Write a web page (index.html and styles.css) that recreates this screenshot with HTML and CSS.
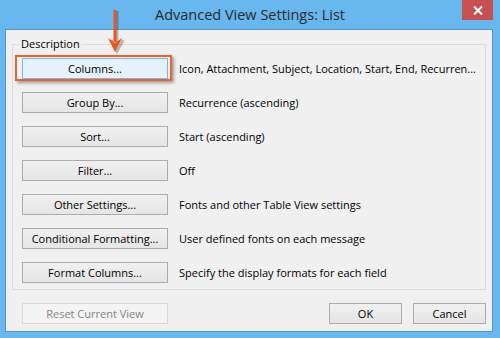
FILE: index.html
```html
<html>
<head>
  <title>Advanced View Settings: List</title>
  <link rel="stylesheet" href="styles.css">
</head>
<body>

<div class="window">
  <div class="titlebar">
    <span class="title">Advanced View Settings: List</span>
    <div class="close">
      <svg width="10" height="9" viewBox="0 0 10 9">
        <path d="M1 0.5 L9 8.5 M9 0.5 L1 8.5" stroke="#fff" stroke-width="2" fill="none"/>
      </svg>
    </div>
  </div>

  <div class="client">
    <fieldset class="group">
      <legend>Description</legend>
      <div class="row">
        <span class="marked"><button class="btn focused">Columns...</button></span>
        <span class="desc">Icon, Attachment, Subject, Location, Start, End, Recurren...</span>
      </div>
      <div class="row">
        <button class="btn">Group By...</button>
        <span class="desc">Recurrence (ascending)</span>
      </div>
      <div class="row">
        <button class="btn">Sort...</button>
        <span class="desc">Start (ascending)</span>
      </div>
      <div class="row">
        <button class="btn">Filter...</button>
        <span class="desc">Off</span>
      </div>
      <div class="row">
        <button class="btn">Other Settings...</button>
        <span class="desc">Fonts and other Table View settings</span>
      </div>
      <div class="row">
        <button class="btn">Conditional Formatting...</button>
        <span class="desc">User defined fonts on each message</span>
      </div>
      <div class="row">
        <button class="btn">Format Columns...</button>
        <span class="desc">Specify the display formats for each field</span>
      </div>
    </fieldset>

    <div class="footer">
      <button class="btn" disabled>Reset Current View</button>
      <div class="actions">
        <button class="btn small">OK</button>
        <button class="btn small">Cancel</button>
      </div>
    </div>
  </div>

  <!-- callout arrow -->
  <svg class="arrow" width="24" height="48" viewBox="0 0 24 48">
    <path d="M13 3 L13 36 M7 32 L13 43 L19 32" stroke="rgba(0,0,0,0.25)" stroke-width="3" fill="none"/>
    <path d="M11 2 L11 34" stroke="#e5591f" stroke-width="3" fill="none"/>
    <path d="M4 30 L11 44 L18 30 L11 35 Z" fill="#e5591f"/>
  </svg>
</div>

</body>
</html>
```

FILE: styles.css
```css
* {
  box-sizing: border-box;
}

body {
  margin: 0;
  background: #68b7ef;
  font-family: 'Open Sans', 'Noto Sans', sans-serif;
  font-size: 11px;
  color: #000;
}

.window {
  position: relative;
  width: 500px;
  height: 338px;
}

.titlebar {
  position: relative;
  height: 29px;
  display: flex;
  justify-content: center;
  align-items: center;
}

.title {
  font-size: 14.5px;
  color: #2b2b2b;
}

.close {
  position: absolute;
  top: 0;
  right: 7px;
  width: 31px;
  height: 20px;
  background: #c75050;
  display: flex;
  justify-content: center;
  align-items: center;
}

.client {
  margin: 0 7px 6px 5px;
  height: 303px;
  background: #f0f0f0;
  border: 1px solid #5796c9;
  padding: 0 6px;
}

.group {
  margin: 6px 0 0 0;
  padding: 6px 0 6px 9px;
  border: 1px solid #dcdcdc;
  display: flex;
  flex-direction: column;
  gap: 13px;
}

.group legend {
  padding: 0 1px;
  margin-left: -2px;
  line-height: 16px;
  font-size: 11px;
}

.row {
  display: flex;
  align-items: center;
}

.btn {
  width: 146px;
  height: 21px;
  padding: 0;
  font-family: inherit;
  font-size: 11px;
  color: #000;
  background: linear-gradient(#f0f0f0, #e5e5e5);
  border: 1px solid #acacac;
}

.btn.focused {
  background: #e5f1fb;
  border-color: #7eb4ea;
  box-shadow: inset 0 0 0 1px #e5f1fb;
}

.btn:disabled {
  background: #f4f4f4;
  border-color: #d9d9d9;
  color: #838383;
}

.btn.small {
  width: 73px;
}

.marked {
  position: relative;
  display: flex;
}

.marked::after {
  content: "";
  position: absolute;
  top: -3px;
  left: -7px;
  right: -4px;
  bottom: -2px;
  border: 2px solid #e8642c;
  box-shadow: 2px 2px 3px rgba(0, 0, 0, 0.35);
}

.desc {
  margin-left: 11px;
  white-space: nowrap;
}

.footer {
  display: flex;
  justify-content: space-between;
  margin-top: 13px;
  padding-left: 10px;
}

.actions {
  display: flex;
  gap: 11px;
}

.arrow {
  position: absolute;
  left: 104px;
  top: 8px;
}
```
